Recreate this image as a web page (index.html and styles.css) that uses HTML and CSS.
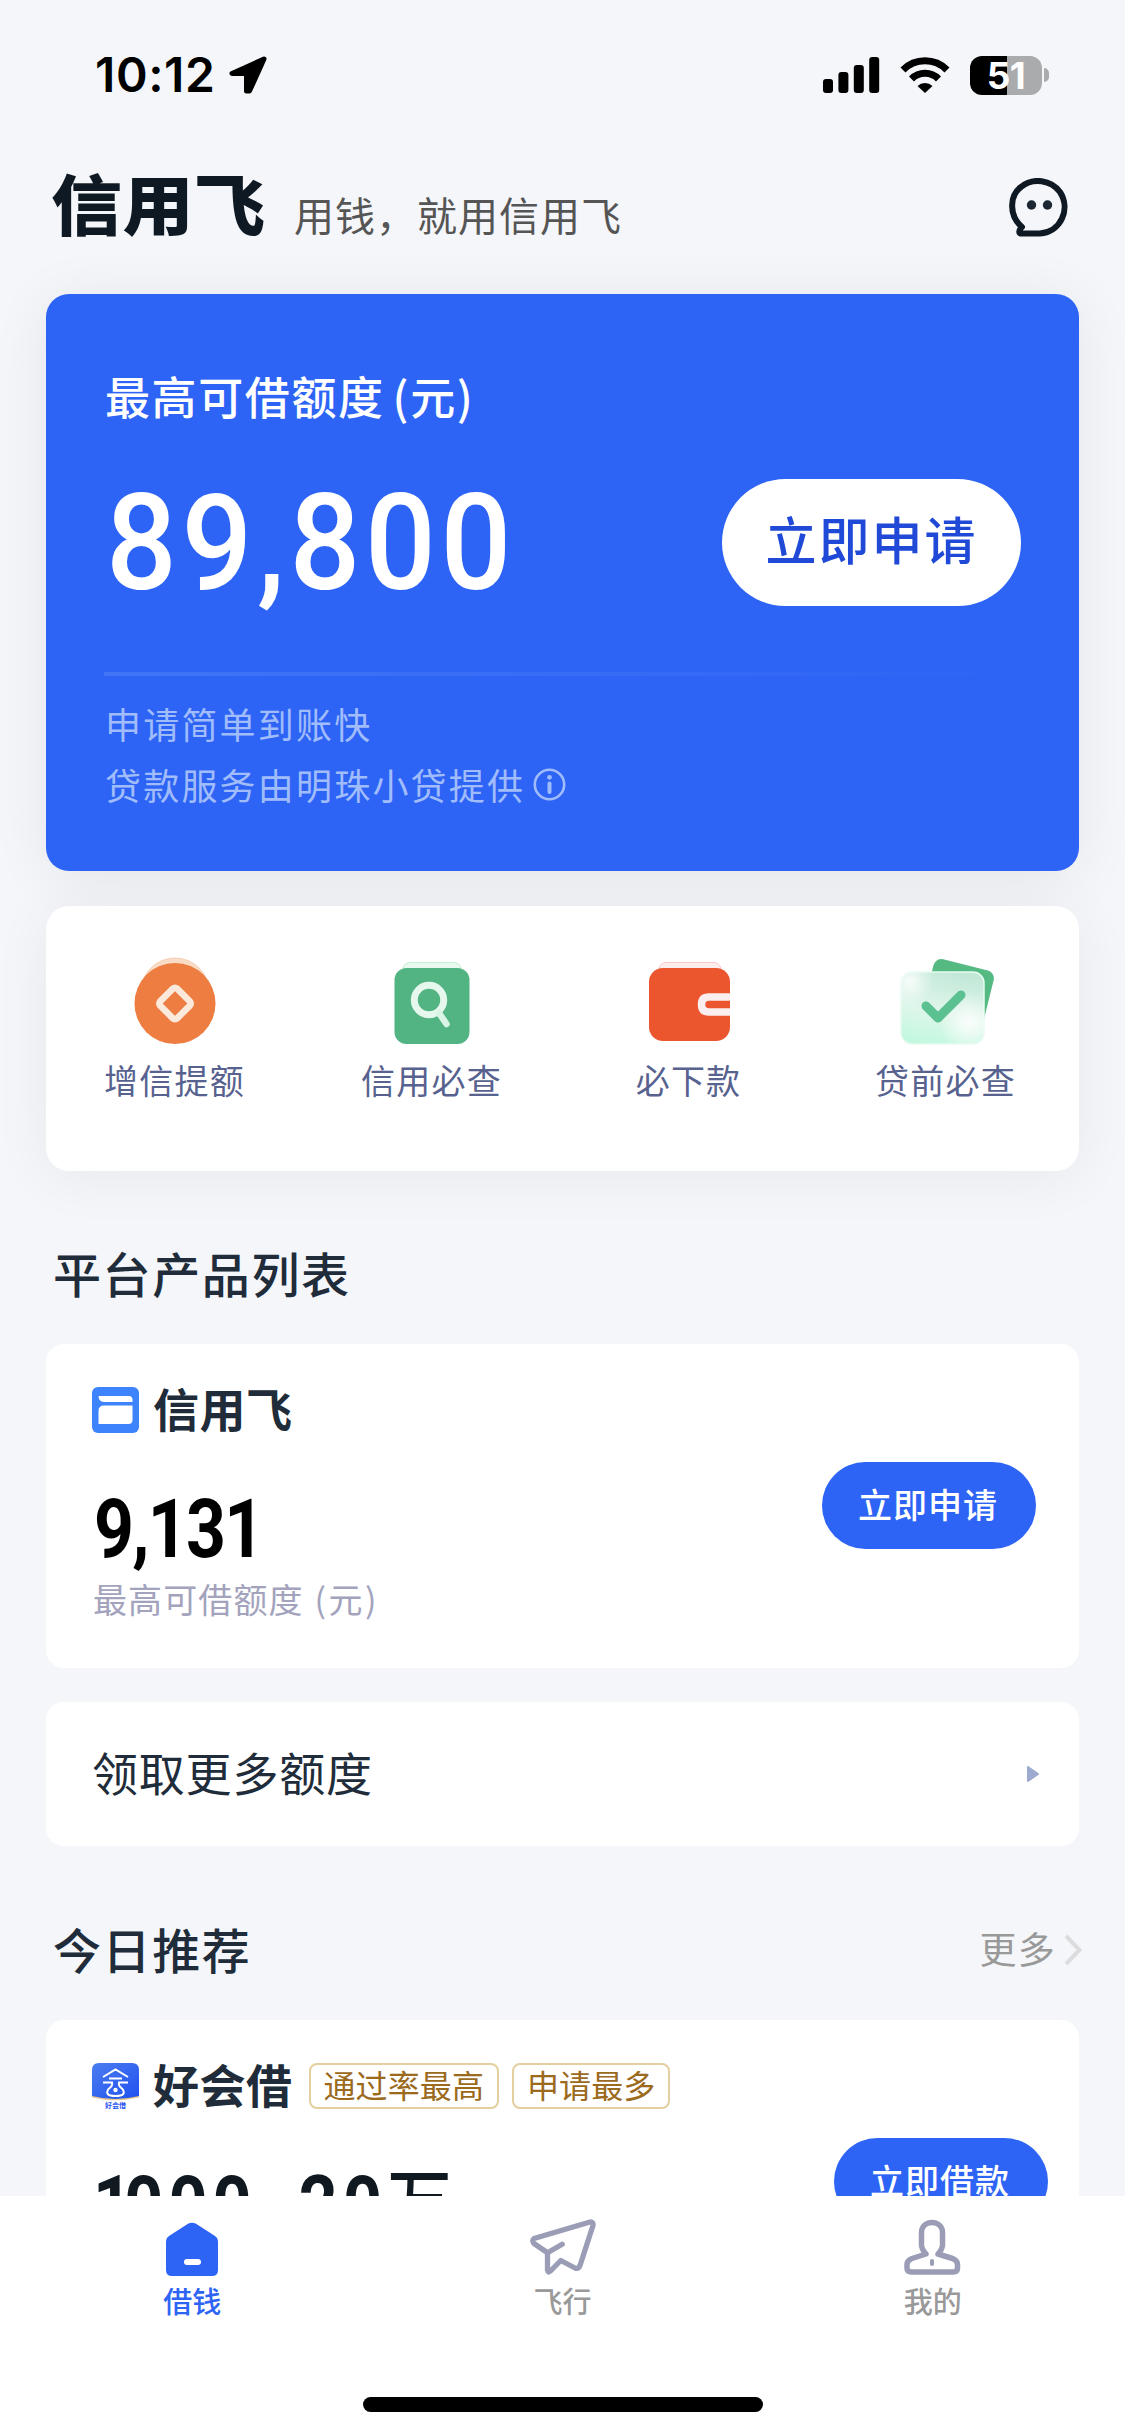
FILE: index.html
```html
<!DOCTYPE html>
<html lang="zh-CN">
<head>
<meta charset="utf-8">
<title>信用飞</title>
<link rel="stylesheet" href="styles.css">
</head>
<body>
<div class="app">
  <div class="status">
    <span class="clock">10:12</span>
    <svg class="loc" width="38" height="38" viewBox="0 0 38 38"><path d="M35 3 L3 17.500 H17.500 V35 H20.500 Z" stroke="#000" stroke-width="5" stroke-linejoin="round"/></svg>
    <svg class="signal" width="57" height="36" viewBox="0 0 57 36"><rect y="22" width="10" height="14" rx="3"/><rect x="15.400" y="15" width="10" height="21" rx="3"/><rect x="30.800" y="8" width="10" height="28" rx="3"/><rect x="46.200" width="10" height="36" rx="3"/></svg>
    <svg class="wifi" width="50" height="36" viewBox="0 0 50 36" fill="none" stroke="#000" stroke-width="7"><path d="M3 13 A31 31 0 0 1 47 13"/><path d="M11.500 22 A19 19 0 0 1 38.500 22"/><path d="M17.500 29 A11 11 0 0 1 32.500 29 L25 36 Z" fill="#000" stroke="none"/></svg>
    <span class="battery">51</span>
    <span class="nub"></span>
  </div>

  <header class="header">
    <span class="logo">信用飞</span>
    <span class="slogan">用钱，就用信用飞</span>
    <svg class="chat" width="60" height="60" viewBox="0 0 60 60" fill="none" stroke="#0f1923" stroke-width="6" stroke-linejoin="round" stroke-linecap="round"><path d="M13 49 C-1 37 1 17 12 9 C24 -1 42 2 51 14 C62 31 52 54 31 55.500 H11 Q9 53 13 49 Z"/><circle cx="22.500" cy="27" r="4.700" fill="#1b2733" stroke="none"/><circle cx="38.500" cy="27" r="4.700" fill="#1b2733" stroke="none"/></svg>
  </header>

  <section class="hero">
    <div class="hero-title">最高可借额度<span class="unit">(元)</span></div>
    <div class="hero-main">
      <span class="hero-num">89,800</span>
      <span class="hero-btn">立即申请</span>
    </div>
    <div class="hero-line"></div>
    <div class="hero-note">申请简单到账快</div>
    <div class="hero-note">贷款服务由明珠小贷提供
      <svg width="33" height="33" viewBox="0 0 33 33" fill="none" stroke="currentColor"><circle cx="16.500" cy="16.500" r="14.700" stroke-width="2.600"/><path d="M16.500 15.500 V24" stroke-width="4" stroke-linecap="round"/><circle cx="16.500" cy="9.300" r="2.400" fill="currentColor" stroke="none"/></svg>
    </div>
  </section>

  <section class="features">
    <div class="feature">
      <svg width="96" height="92" viewBox="0 0 96 92"><circle cx="48" cy="35" r="34" fill="#f9dcc6" stroke="#f6cdb0"/><circle cx="48" cy="46.500" r="40.500" fill="#ed7d40"/><rect x="36" y="34.500" width="24" height="24" rx="3" transform="rotate(45 48 46.500)" fill="none" stroke="#fbeadb" stroke-width="6.500"/></svg>
      <span>增信提额</span>
    </div>
    <div class="feature">
      <svg width="96" height="92" viewBox="0 0 96 92"><rect x="19" y="5.500" width="58" height="20" rx="7" fill="#e9f9ef" stroke="#c5efd5"/><rect x="10.500" y="11" width="75" height="76" rx="12" fill="#53b483"/><circle cx="45" cy="43" r="14.700" fill="none" stroke="#e6f7ee" stroke-width="7"/><path d="M55 56 L62.500 67" stroke="#d9f3e5" stroke-width="6.500" stroke-linecap="round"/></svg>
      <span>信用必查</span>
    </div>
    <div class="feature">
      <svg width="96" height="92" viewBox="0 0 96 92"><rect x="18" y="5.500" width="62" height="20" rx="7" fill="#fdeeed" stroke="#fac9c8"/><rect x="8" y="11" width="81" height="73" rx="14" fill="#eb562e"/><path d="M89 40 H68 Q60.500 40 60.500 47.500 Q60.500 55 68 55 H89" fill="none" stroke="#faeeee" stroke-width="7.500"/></svg>
      <span>必下款</span>
    </div>
    <div class="feature">
      <svg width="96" height="92" viewBox="0 0 96 92"><defs><linearGradient id="glass" x1="0.600" y1="0" x2="0.350" y2="1"><stop offset="0" stop-color="#c2e8d8"/><stop offset="0.550" stop-color="#dff6eb"/><stop offset="1" stop-color="#c3f8df"/></linearGradient><radialGradient id="shine"><stop offset="0" stop-color="#fff" stop-opacity="0.850"/><stop offset="1" stop-color="#fff" stop-opacity="0"/></radialGradient><clipPath id="sheet"><rect x="3" y="15" width="83" height="72" rx="11"/></clipPath></defs><rect x="29" y="7" width="62" height="62" rx="8" transform="rotate(14 60 38)" fill="#55b982"/><rect x="3" y="15" width="83" height="72" rx="11" fill="url(#glass)" stroke="#e6fbf2" stroke-width="1.500"/><g clip-path="url(#sheet)"><circle cx="71" cy="66" r="30" fill="url(#shine)"/><circle cx="12" cy="24" r="24" fill="url(#shine)"/></g><path d="M28 49 L40 61 L63 38" fill="none" stroke="#5cc190" stroke-width="9" stroke-linecap="round" stroke-linejoin="round"/></svg>
      <span>贷前必查</span>
    </div>
  </section>

  <h2 class="section-title">平台产品列表</h2>
  <section class="product">
    <div class="product-info">
      <div class="product-head">
        <svg width="47" height="46" viewBox="0 0 47 46"><rect width="47" height="46" rx="6" fill="#3d83fb"/><path d="M6.500 9 H37 Q40.500 9 40.500 12.500 V15 H13 Q6.500 15 6.500 9 Z M12 18.500 H40.500 V33 Q40.500 37 36.500 37 H6.500 V24 Q6.500 18.500 12 18.500 Z" fill="#fff"/></svg>
        <span class="name">信用飞</span>
      </div>
      <div class="amount">9,131</div>
      <div class="caption">最高可借额度<span class="cap-unit">(元)</span></div>
    </div>
    <span class="apply">立即申请</span>
  </section>

  <section class="more-card">
    <span>领取更多额度</span>
    <svg width="12" height="16" viewBox="0 0 12 16"><path d="M1 1 L11 8 L1 15 Z" fill="#9eabd0" stroke="#9eabd0" stroke-width="2" stroke-linejoin="round"/></svg>
  </section>

  <div class="rec-head">
    <h2 class="section-title">今日推荐</h2>
    <div class="more"><span>更多</span><svg width="18" height="32" viewBox="0 0 18 32"><path d="M2 2 L15.500 16 L2 30" fill="none" stroke="#dcdcde" stroke-width="4"/></svg></div>
  </div>
  <section class="rec">
    <div class="product-head">
      <svg width="47" height="46" viewBox="0 0 47 46"><defs><linearGradient id="haohui" x1="0" y1="0" x2="1" y2="1"><stop offset="0" stop-color="#4c7df0"/><stop offset="1" stop-color="#1f50f0"/></linearGradient></defs><path d="M0 30 V34.500 Q23 40 47 34.500 V30 Z" fill="#e8c98a"/><path d="M7 0 H40 Q47 0 47 7 V33 Q23 39 0 33 V7 Q0 0 7 0 Z" fill="url(#haohui)"/><path d="M11 14 L23.500 6.500 L36 14 M17 15.500 H30 M11 19.500 H20 Q21 23 16.500 26 Q12 33 23.500 33 Q35 33 30.500 26 Q26 23 27 19.500 H36" fill="none" stroke="#fff" stroke-width="2"/><circle cx="23.500" cy="27" r="2.200" fill="#fff"/><text x="23.500" y="45" text-anchor="middle" class="mini">好会借</text></svg>
      <span class="name">好会借</span>
      <span class="tag">通过率最高</span>
      <span class="tag">申请最多</span>
    </div>
    <div class="rec-row">
      <div class="range"><em>1</em>000<i>-</i>20<b>万</b></div>
      <span class="apply">立即借款</span>
    </div>
  </section>

  <nav class="tabs">
    <div class="tab active">
      <svg width="68" height="58" viewBox="0 0 68 58"><path d="M30 5.800 Q34 3.500 38 5.800 L57 18 Q60 20 60 24 V52 Q60 58 54 58 H14 Q8 58 8 52 V24 Q8 20 11 18 Z" fill="#2d64f5"/><rect x="26" y="41" width="17" height="6" rx="3" fill="#fff"/></svg>
      <span>借钱</span>
    </div>
    <div class="tab">
      <svg width="68" height="58" viewBox="0 0 68 58" fill="none" stroke="#9a9db5" stroke-width="5.300" stroke-linejoin="round" stroke-linecap="round"><path d="M62 4 L6 20.500 Q3.500 22.500 6 25.500 L19.500 34.800 V52 Q20 55.500 22.500 53 L32.800 42.500 L47 50 Q50.500 51.500 52 47.500 L65 7.500 Q65.500 3.500 62 4 Z M19.500 34.800 L34.200 26.300"/></svg>
      <span>飞行</span>
    </div>
    <div class="tab">
      <svg width="68" height="58" viewBox="0 0 68 58" fill="none" stroke="#9a9db5" stroke-width="5.500" stroke-linejoin="round" stroke-linecap="round"><path d="M33 4.500 C26.500 4.500 22.500 9 22.500 15 V27 C22.500 31 24.500 33 27 36 L13 40.500 Q8 42.500 8 46.500 V50 Q8 54 12.500 54 H54 Q58.500 54 58.500 50 V46.500 Q58.500 42.500 53.500 40.500 L39 36 C41.500 33 43.500 31 43.500 27 V15 C43.500 9 39.500 4.500 33 4.500 Z"/><path d="M33 43 V46" stroke-width="4"/></svg>
      <span>我的</span>
    </div>
    <div class="home-bar"></div>
  </nav>
</div>
</body>
</html>
```
FILE: styles.css
```css
* { box-sizing: border-box; }
body {
  margin: 0;
  background: #f4f6fa;
  font-family: "Noto Sans CJK SC", sans-serif;
  color: #212c3a;
}
svg { display: block; flex: none; }
span, h2 { white-space: nowrap; }
.app {
  width: 1125px;
  height: 2435px;
  overflow: hidden;
  display: flex;
  flex-direction: column;
}
.app > * { flex: none; }

.status {
  height: 150px;
  padding: 0 0 0 95px;
  display: flex;
  align-items: center;
  color: #000;
}
.clock {
  font: 600 48px/60px Inter, sans-serif;
  letter-spacing: 0.600px;
  width: 134px;
}
.loc { margin-right: 556px; }
.signal { margin-right: 20px; }
.wifi { margin-right: 20px; }
.battery {
  width: 72px;
  height: 39px;
  border-radius: 12px;
  background: linear-gradient(90deg, #000 51%, #aaabad 51%);
  color: #fff;
  font: 700 37px/39px Inter, sans-serif;
  letter-spacing: -0.500px;
  text-align: center;
}
.nub {
  width: 5px;
  height: 14px;
  margin-left: 2px;
  border-radius: 0 5px 5px 0;
  background: #aaabad;
}

.header {
  height: 144px;
  padding: 0 56px 0 51px;
  display: flex;
  align-items: flex-start;
}
.logo {
  width: 243px;
  font-size: 71px;
  font-weight: 900;
  letter-spacing: 0.500px;
  line-height: 72px;
  margin-top: 15px;
  transform: scaleY(0.93);
  color: #0f1923;
}
.slogan {
  margin-top: 34px;
  font-size: 40px;
  letter-spacing: 1px;
  line-height: 60px;
  color: #555;
}
.chat { margin: 28px 0 0 auto; }

.hero {
  height: 577px;
  margin: 0 46px;
  padding: 72px 58px 0;
  border-radius: 23px;
  background: #2d64f5;
  color: #fff;
  box-shadow: 0 6px 60px rgba(0, 0, 0, 0.07);
}
.hero-title {
  height: 60px;
  line-height: 60px;
  font-size: 45px;
  font-weight: 500;
  letter-spacing: 1.6px;
  padding-left: 1px;
}
.unit { margin-left: 8px; }
.hero-main {
  height: 127px;
  margin-top: 53px;
  display: flex;
  align-items: center;
  justify-content: space-between;
}
.hero-num {
  font: 500 134px/127px Roboto, sans-serif;
  letter-spacing: 5px;
  margin: 2px 0 0 2px;
  transform: scaleX(0.93);
  transform-origin: 0 50%;
}
.hero-btn {
  width: 299px;
  height: 127px;
  border-radius: 64px;
  background: #fff;
  color: #1f49d6;
  font-size: 51px;
  font-weight: 500;
  letter-spacing: 2px;
  line-height: 119px;
  text-align: center;
}
.hero-line {
  height: 4px;
  margin: 66px 0 17px;
  background: linear-gradient(90deg, #4175f6, #2d64f5);
}
.hero-note {
  height: 61px;
  line-height: 61px;
  display: flex;
  align-items: center;
  gap: 8px;
  padding-left: 1px;
  font-size: 36px;
  letter-spacing: 2.200px;
  color: #a0bcfb;
}

.features {
  height: 265px;
  margin: 35px 46px 0;
  padding: 51px 5px 0 0;
  display: grid;
  grid-template-columns: repeat(4, 1fr);
  border-radius: 23px;
  background: #fff;
  box-shadow: 0 6px 60px rgba(0, 0, 0, 0.06);
}
.feature {
  display: flex;
  flex-direction: column;
  align-items: center;
  gap: 6px;
  font-size: 34px;
  letter-spacing: 1.200px;
  line-height: 50px;
  color: #57628f;
}

.section-title {
  margin: 67px 0 3px 53px;
  height: 68px;
  font-size: 48px;
  font-weight: 500;
  letter-spacing: 1.600px;
  line-height: 68px;
}
.product {
  height: 324px;
  margin: 35px 46px 0;
  padding: 0 43px 0 46px;
  display: flex;
  justify-content: space-between;
  border-radius: 18px;
  background: #fff;
}
.product-head {
  height: 46px;
  margin-top: 43px;
  display: flex;
  align-items: center;
}
.name {
  margin: 0 16px 6px 14px;
  font-size: 46px;
  font-weight: 700;
  letter-spacing: 0.500px;
  line-height: 46px;
}
.amount {
  height: 80px;
  margin: 56px 0 0 2px;
  font: 700 82px/80px Roboto, sans-serif;
  letter-spacing: -2px;
  transform: scaleX(0.85);
  transform-origin: 0 50%;
  color: #000;
}
.caption {
  margin-top: 5px;
  font-size: 34px;
  letter-spacing: 1.100px;
  line-height: 50px;
  padding-left: 1px;
  color: #a3a3bd;
}
.cap-unit { margin-left: 11px; letter-spacing: 2.500px; }
.apply {
  width: 214px;
  height: 87px;
  margin-top: 118px;
  border-radius: 44px;
  background: #2d64f5;
  color: #fff;
  font-size: 34px;
  font-weight: 500;
  letter-spacing: 1px;
  line-height: 84px;
  padding-right: 2px;
  text-align: center;
}

.more-card {
  height: 144px;
  margin: 34px 46px 0;
  padding: 0 40px 0 46px;
  display: flex;
  align-items: center;
  justify-content: space-between;
  border-radius: 18px;
  background: #fff;
  font-size: 46px;
  letter-spacing: 0.800px;
}
.more-card span { margin-bottom: 6px; }

.rec-head {
  height: 174px;
  padding-right: 43px;
  display: flex;
  align-items: center;
  justify-content: space-between;
}
.rec-head .section-title { margin: 30px 0 0 53px; }
.more {
  display: flex;
  align-items: center;
  gap: 8px;
  margin-top: 34px;
  font-size: 37px;
  letter-spacing: 1.200px;
  color: #999;
}
.more span { margin-bottom: 4px; }
.rec {
  height: 176px;
  margin: 0 46px;
  padding: 0 31px 0 46px;
  border-radius: 18px 18px 0 0;
  background: #fff;
  overflow: hidden;
}
.mini { font-size: 7px; font-weight: 700; fill: #2d56f0; }
.tag {
  height: 46px;
  margin-right: 13px;
  padding: 0 13px;
  border: 2px solid #e3cf9f;
  border-radius: 8px;
  font-size: 32px;
  letter-spacing: 0.100px;
  line-height: 39px;
  color: #9b6a1d;
}
.rec-row {
  display: flex;
  justify-content: space-between;
}
.range {
  width: 500px;
  margin: 56px 0 0 1px;
  font: 700 80px/80px Roboto, "Noto Sans CJK SC", sans-serif;
  letter-spacing: 6px;
  transform: scaleX(0.85);
  transform-origin: 0 50%;
  color: #101820;
}
.range em { font-style: normal; letter-spacing: -9px; }
.range i { font-style: normal; margin: 0 6px; }
.range b { font-size: 76px; font-weight: 500; line-height: 1; }
.rec-row .apply { margin-top: 29px; }

.tabs {
  height: 239px;
  padding: 22px 7px 0;
  display: grid;
  grid-template-columns: repeat(3, 1fr);
  grid-template-rows: 179px 15px;
  background: #fff;
}
.tab {
  display: flex;
  flex-direction: column;
  align-items: center;
  gap: 4px;
  font-size: 29px;
  font-weight: 500;
  line-height: 40px;
  color: #999;
}
.tab.active { color: #2d64f5; }
.home-bar {
  grid-column: 1 / -1;
  width: 400px;
  height: 15px;
  justify-self: center;
  border-radius: 8px;
  background: #000;
}
```
